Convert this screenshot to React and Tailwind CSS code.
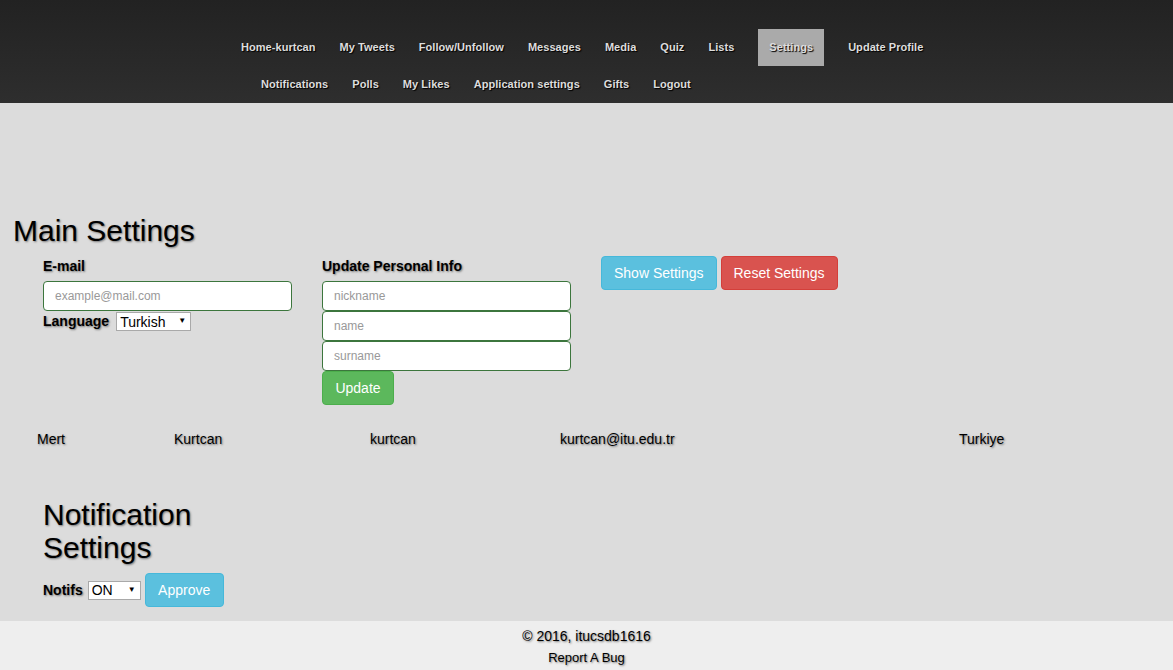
import React from "react";

const sh = "[text-shadow:1px_1px_2px_#777]";

function NavItem({ children, active }) {
  return (
    <a
      className={
        "block h-[37px] leading-[37px] text-[11px] font-bold tracking-[0.05px] text-[#ddd] [text-shadow:1px_1px_1px_#000] whitespace-nowrap " +
        (active ? "bg-[#aaa] px-[11px] mx-[12px]" : "px-[12px]")
      }
    >
      {children}
    </a>
  );
}

function Input({ placeholder }) {
  return (
    <input
      placeholder={placeholder}
      className="block w-[249px] h-[30px] bg-white border border-[#3c763d] rounded-[4px] px-[11px] text-[12px] placeholder:text-[#999] outline-none"
    />
  );
}

function Select({ value, width }) {
  return (
    <div className={"relative h-[19px] " + width}>
      <select className="block appearance-none w-full h-[19px] bg-white border border-[#a9a9a9] text-[14px] leading-[16px] pl-[3px] py-0 outline-none">
        <option>{value}</option>
      </select>
      <span className="absolute right-[5px] top-[3px] text-[8px] leading-[12px] pointer-events-none">▼</span>
    </div>
  );
}

export default function App() {
  return (
    <div className="min-h-[670px] flex flex-col bg-[#dcdcdc] font-['Liberation_Sans',Arial,sans-serif] text-black">
      <header className="h-[103px] bg-gradient-to-b from-[#222] to-[#2e2e2e] pt-[29px]">
        <div className="flex pl-[229px]">
          <NavItem>Home-kurtcan</NavItem>
          <NavItem>My Tweets</NavItem>
          <NavItem>Follow/Unfollow</NavItem>
          <NavItem>Messages</NavItem>
          <NavItem>Media</NavItem>
          <NavItem>Quiz</NavItem>
          <NavItem>Lists</NavItem>
          <NavItem active>Settings</NavItem>
          <NavItem>Update Profile</NavItem>
        </div>
        <div className="flex pl-[249px]">
          <NavItem>Notifications</NavItem>
          <NavItem>Polls</NavItem>
          <NavItem>My Likes</NavItem>
          <NavItem>Application settings</NavItem>
          <NavItem>Gifts</NavItem>
          <NavItem>Logout</NavItem>
        </div>
      </header>

      <main className="flex-1">
        <h1 className={"text-[30px] leading-[33px] ml-[13px] mt-[111px] " + sh}>Main Settings</h1>

        <div className="flex ml-[43px] mt-[8px]">
          <div className="w-[279px]">
            <div className={"text-[14px] font-bold leading-[16px] pt-[3px] " + sh}>E-mail</div>
            <div className="mt-[7px]">
              <Input placeholder="example@mail.com" />
            </div>
            <div className="flex items-center">
              <span className={"text-[14px] font-bold mr-[7px] " + sh}>Language</span>
              <Select value="Turkish" width="w-[75px]" />
            </div>
          </div>
          <div className="w-[279px]">
            <div className={"text-[14px] font-bold leading-[16px] pt-[3px] " + sh}>Update Personal Info</div>
            <div className="mt-[7px] flex flex-col">
              <Input placeholder="nickname" />
              <Input placeholder="name" />
              <Input placeholder="surname" />
            </div>
            <button className="w-[72px] h-[34px] bg-[#5cb85c] border border-[#4cae4c] rounded-[4px] text-white text-[14px]">
              Update
            </button>
          </div>
          <div className="flex gap-[4px] pt-[1px] items-start">
            <button className="h-[34px] px-[12px] bg-[#5bc0de] border border-[#46b8da] rounded-[4px] text-white text-[14px]">
              Show Settings
            </button>
            <button className="h-[34px] px-[12px] bg-[#d9534f] border border-[#d43f3a] rounded-[4px] text-white text-[14px]">
              Reset Settings
            </button>
          </div>
        </div>

        <div className={"flex text-[14px] mt-[26px] h-[16px] leading-[16px] " + sh}>
          <span className="ml-[37px] w-[137px]">Mert</span>
          <span className="w-[196px]">Kurtcan</span>
          <span className="w-[190px]">kurtcan</span>
          <span className="w-[399px]">kurtcan@itu.edu.tr</span>
          <span>Turkiye</span>
        </div>

        <h2 className={"text-[30px] leading-[33px] ml-[43px] mt-[51px] w-[170px] " + sh}>
          Notification Settings
        </h2>
        <div className="flex items-center ml-[43px] mt-[9px] mb-[13px]">
          <span className={"text-[14px] font-bold mr-[5px] " + sh}>Notifs</span>
          <Select value="ON" width="w-[53px]" />
          <button className="ml-[4px] w-[79px] h-[34px] bg-[#5bc0de] border border-[#46b8da] rounded-[4px] text-white text-[14px]">
            Approve
          </button>
        </div>
      </main>

      <footer className={"h-[49px] bg-[#eee] flex flex-col items-center pt-[7px] " + sh}>
        <div className="text-[14px] leading-[16px]">© 2016, itucsdb1616</div>
        <div className="text-[13px] leading-[15px] mt-[6px]">Report A Bug</div>
      </footer>
    </div>
  );
}
